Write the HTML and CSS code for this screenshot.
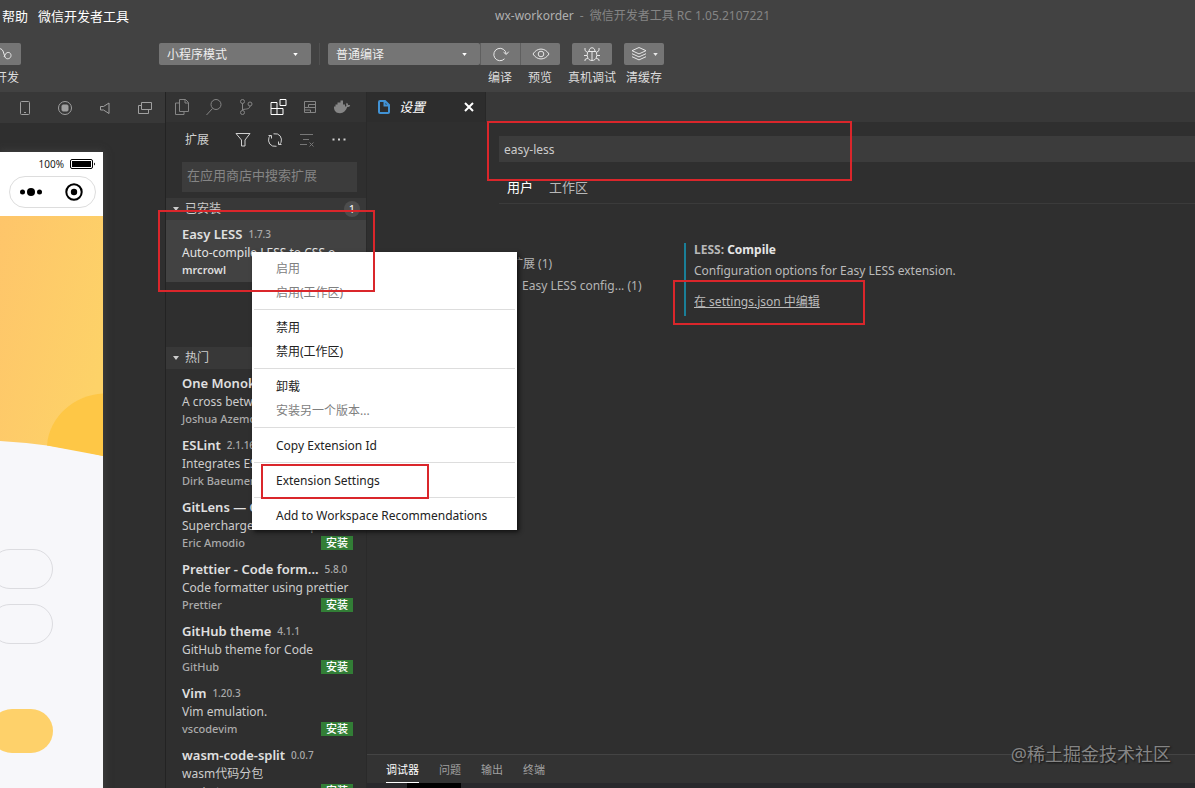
FILE: index.html
```html
<!DOCTYPE html>
<html lang="zh-CN">
<head>
<meta charset="utf-8">
<title>wx-workorder - 微信开发者工具</title>
<link rel="stylesheet" href="styles.css">
</head>
<body>
<div class="app">
  <header class="top">
    <div class="titlebar">
      <nav class="menubar"><button>帮助</button><button>微信开发者工具</button></nav>
      <div class="title"><span class="project">wx-workorder</span><span>-</span><span>微信开发者工具 RC 1.05.2107221</span></div>
    </div>
    <div class="toolbar">
      <div class="tool tool-cloud">
        <button class="tool-btn" aria-label="云开发"><svg width="24" height="16" viewBox="0 0 24 16"><path d="M9 3c2-1 4 0 5 2l2 6c1 3 6 2 6-1.500s-4-4-5.500-1.500L15 11"/></svg></button>
        <span>云开发</span>
      </div>
      <div class="pick pick-mode">
        <select aria-label="模式"><option>小程序模式</option></select>
        <svg class="caret" width="6" height="4" viewBox="0 0 6 4"><path d="M0 0h6L3 4z"/></svg>
      </div>
      <span class="divider"></span>
      <div class="compile">
        <div class="pick pick-compile">
          <select aria-label="编译模式"><option>普通编译</option></select>
          <svg class="caret" width="6" height="4" viewBox="0 0 6 4"><path d="M0 0h6L3 4z"/></svg>
        </div>
        <div class="tool">
          <button class="tool-btn mid" aria-label="编译"><svg width="18" height="16" viewBox="0 0 18 16"><path d="M12.500 12.800A6.200 6.200 0 1 1 14.200 8M11.500 6.200l2.800 2.300 2.400-2.800"/></svg></button>
          <span>编译</span>
        </div>
        <div class="tool">
          <button class="tool-btn last" aria-label="预览"><svg width="18" height="16" viewBox="0 0 18 16"><path d="M1 8c4-6.600 12-6.600 16 0-4 6.600-12 6.600-16 0z"/><circle cx="9" cy="8" r="2.800"/></svg></button>
          <span>预览</span>
        </div>
      </div>
      <div class="tool tool-debug">
        <button class="tool-btn" aria-label="真机调试"><svg width="18" height="16" viewBox="0 0 18 16"><path d="M5 5.500h8c1.500 3 1 9-4 9s-5.500-6-4-9zM6 5.500c0-5 6-5 6 0M9 5.500v9M4.500 6.500L2 4.500V2M13.500 6.500L16 4.500V2M4 9.500H1M14 9.500h3M5 12l-3 1.500V15M13 12l3 1.500V15"/></svg></button>
        <span>真机调试</span>
      </div>
      <div class="tool">
        <button class="tool-btn" aria-label="清缓存"><svg width="16" height="16" viewBox="0 0 16 16"><path d="M8 1.500l7 3.200-7 3.200-7-3.200zM1 7.700l7 3.200 7-3.200M1 10.700l7 3.200 7-3.200"/></svg><svg class="fill" width="5" height="3" viewBox="0 0 6 4"><path d="M0 0h6L3 4z"/></svg></button>
        <span>清缓存</span>
      </div>
    </div>
  </header>

  <div class="body">
    <section class="simulator">
      <div class="sim-bar">
        <button aria-label="设备"><svg width="16" height="16" viewBox="0 0 16 16"><rect x="3.500" y="1.500" width="9" height="13" rx="1"/><path d="M7 12.500h2"/></svg></button>
        <button aria-label="录制"><svg width="16" height="16" viewBox="0 0 16 16"><circle cx="8" cy="8" r="6.500"/><rect class="solid" x="5" y="5" width="6" height="6" rx="1"/></svg></button>
        <button aria-label="声音"><svg width="16" height="16" viewBox="0 0 16 16"><path d="M3.500 6.500h3L12 3v10.500L6.500 10h-3z"/></svg></button>
        <button aria-label="窗口"><svg width="16" height="16" viewBox="0 0 16 16"><path d="M4.500 2.500h10v7h-10zM4.500 5.500h-3v8h10v-4"/></svg></button>
      </div>
      <div class="phone">
        <div class="phone-top">
          <div class="battery">100%<svg width="26" height="10" viewBox="0 0 26 10"><rect x=".5" y=".5" width="22" height="9" rx="1.500" fill="none" stroke="#000"/><path d="M2 2h19v6H2zM24 3.500q2 1.500 0 3z"/></svg></div>
          <div class="capsule">
            <svg width="24" height="10" viewBox="0 0 24 10"><circle cx="3.500" cy="5" r="2.500"/><circle cx="12" cy="5" r="4"/><circle cx="20.500" cy="5" r="2.500"/></svg>
            <svg width="18" height="18" viewBox="0 0 18 18"><circle cx="9" cy="9" r="7.700" fill="none" stroke="#000" stroke-width="2"/><circle cx="9" cy="9" r="3.200"/></svg>
          </div>
        </div>
        <svg class="hero" width="103" height="240" viewBox="0 0 103 240">
          <defs><linearGradient id="sun" x1="0" y1="0" x2="1" y2=".6"><stop offset="0" stop-color="#fec56a"/><stop offset="1" stop-color="#fdd268"/></linearGradient></defs>
          <path fill="url(#sun)" d="M0 0h103v240Q55 228 0 225z"/>
          <path fill="#fec746" d="M103 177.500C75 179 49 200 47 229.500L103 240z"/>
        </svg>
        <input class="field" aria-label="账号">
        <input class="field" aria-label="密码">
        <button class="submit" aria-label="登录"></button>
      </div>
    </section>

    <aside class="sidebar">
      <div class="views">
        <button aria-label="文件"><svg width="18" height="18" viewBox="0 0 18 18"><path d="M6.500 1.500h6l3 3v9h-9zM12 1.500v3.500h3.500M6.500 5H2.500v11.500h8.500v-3"/></svg></button>
        <button aria-label="搜索"><svg width="18" height="18" viewBox="0 0 18 18"><circle cx="11" cy="6.500" r="5"/><path d="M7.500 10.500L1.500 17"/></svg></button>
        <button aria-label="源代码管理"><svg width="18" height="18" viewBox="0 0 18 18"><circle cx="5.500" cy="3.500" r="2"/><circle cx="5.500" cy="14.500" r="2"/><circle cx="13" cy="6" r="2"/><path d="M5.500 5.500v7M13 8c0 3-3.500 3-7.500 3.500"/></svg></button>
        <button class="on" aria-label="扩展"><svg width="18" height="18" viewBox="0 0 18 18"><path d="M2 4.500h6v6h6v6H2zM2 10.500h6v6M11 1.500h6v6h-6z"/></svg></button>
        <button aria-label="模板"><svg width="18" height="18" viewBox="0 0 18 18"><path d="M3.500 3.500h11v11h-11zM14.500 6.500h-7v3h7M3.500 9.500h4M3.500 12h6v2.500"/></svg></button>
        <button aria-label="Docker"><svg width="18" height="18" viewBox="0 0 18 18"><path class="solid" stroke="none" d="M1 8.500h1.500v-2h2v-2h3v-2h2.500v4h2v2c1 0 1.500-.3 1.500-.8-.6-.9-.5-2 .3-3 .8.600 1.300 1.400 1.300 2.300.800-.1 1.500 0 2.100.4-.500 1.200-1.500 1.700-2.900 1.700C13 13 10.500 15.200 7 15.200 2.800 15.200.8 12.500 1 8.500z"/></svg></button>
      </div>
      <div class="side-title">
        <h2>扩展</h2>
        <button aria-label="筛选"><svg width="18" height="18" viewBox="0 0 18 18"><path d="M2 2.500h14L11 9v6H7.500V9z"/></svg></button>
        <button aria-label="刷新"><svg width="18" height="18" viewBox="0 0 18 18"><path d="M6.500 15A6.400 6.400 0 0 1 5 4M11.500 3A6.400 6.400 0 0 1 13 14M2.500 4.500h3v3M15.500 13.500h-3v-3M7.500 2.800l4 .2M10.500 15.300l-4-.3"/></svg></button>
        <button class="dim" aria-label="清除"><svg width="18" height="18" viewBox="0 0 18 18"><path d="M2 3.500h13M5 8.500h6M2 13.500h7M11.500 11.500l4 4M15.500 11.500l-4 4"/></svg></button>
        <button aria-label="更多"><svg width="18" height="18" viewBox="0 0 18 18"><path class="solid" d="M2.500 7.500h2v2h-2zM8 7.500h2v2H8zM13.500 7.500h2v2h-2z" stroke="none"/></svg></button>
      </div>
      <div class="side-search"><input type="text" placeholder="在应用商店中搜索扩展" aria-label="在应用商店中搜索扩展"></div>

      <h3 class="group"><svg width="8" height="6" viewBox="0 0 8 6"><path d="M1 1h6L4 5z"/></svg>已安装<span class="badge">1</span></h3>
      <ul class="list installed">
        <li class="ext active"><p class="name"><b>Easy LESS</b><small>1.7.3</small></p><p class="desc">Auto-compile LESS to CSS o</p><p class="by"><b>mrcrowl</b></p></li>
      </ul>
      <h3 class="group"><svg width="8" height="6" viewBox="0 0 8 6"><path d="M1 1h6L4 5z"/></svg>热门</h3>
      <ul class="list">
        <li class="ext"><p class="name"><b>One Monokai</b></p><p class="desc">A cross between</p><p class="by"><span>Joshua Azemoh</span></p></li>
        <li class="ext"><p class="name"><b>ESLint</b><small>2.1.16</small></p><p class="desc">Integrates ESLint</p><p class="by"><span>Dirk Baeumer</span></p></li>
        <li class="ext"><p class="name"><b>GitLens — Git</b></p><p class="desc">Supercharge the Git cap</p><p class="by"><span>Eric Amodio</span><button>安装</button></p></li>
        <li class="ext"><p class="name"><b>Prettier - Code form...</b><small>5.8.0</small></p><p class="desc">Code formatter using prettier</p><p class="by"><span>Prettier</span><button>安装</button></p></li>
        <li class="ext"><p class="name"><b>GitHub theme</b><small>4.1.1</small></p><p class="desc">GitHub theme for Code</p><p class="by"><span>GitHub</span><button>安装</button></p></li>
        <li class="ext"><p class="name"><b>Vim</b><small>1.20.3</small></p><p class="desc">Vim emulation.</p><p class="by"><span>vscodevim</span><button>安装</button></p></li>
        <li class="ext"><p class="name"><b>wasm-code-split</b><small>0.0.7</small></p><p class="desc">wasm代码分包</p><p class="by"><span>wechat</span><button>安装</button></p></li>
      </ul>
    </aside>

    <main class="editor">
      <div class="tabs">
        <div class="tab">
          <svg width="12" height="14" viewBox="0 0 12 14"><path d="M2 1h5l4 4v7a1 1 0 0 1-1 1H2a1 1 0 0 1-1-1V2a1 1 0 0 1 1-1zM6.500 1v4.500H11"/></svg>
          <em>设置</em>
          <button aria-label="关闭"><svg width="10" height="10" viewBox="0 0 10 10"><path d="M1 1l8 8M9 1L1 9"/></svg></button>
        </div>
      </div>
      <div class="settings">
        <input class="query" type="text" value="easy-less" aria-label="搜索设置">
        <div class="scopes"><button class="on">用户</button><button>工作区</button></div>
        <div class="columns">
          <nav class="toc"><a href="#ext">扩展 (1)</a><a class="sub" href="#less">Easy LESS config... (1)</a></nav>
          <section class="setting" id="less">
            <h4><span>LESS:</span> Compile</h4>
            <p>Configuration options for Easy LESS extension.</p>
            <a href="#json">在 settings.json 中编辑</a>
          </section>
        </div>
      </div>
      <div class="panel">
        <button class="on">调试器</button><button>问题</button><button>输出</button><button>终端</button>
      </div>
      <div class="strip"><i></i></div>
    </main>
  </div>

  <div class="menu" role="menu">
    <button role="menuitem" disabled>启用</button>
    <button role="menuitem" disabled>启用(工作区)</button>
    <hr>
    <button role="menuitem">禁用</button>
    <button role="menuitem">禁用(工作区)</button>
    <hr>
    <button role="menuitem">卸载</button>
    <button role="menuitem" disabled>安装另一个版本...</button>
    <hr>
    <button role="menuitem">Copy Extension Id</button>
    <hr>
    <button role="menuitem">Extension Settings</button>
    <hr>
    <button role="menuitem">Add to Workspace Recommendations</button>
  </div>
  <div class="mark mark-ext"></div>
  <div class="mark mark-query"></div>
  <div class="mark mark-json"></div>
  <div class="mark mark-menu"></div>
  <div class="watermark">@稀土掘金技术社区</div>
</div>
</body>
</html>
```
FILE: styles.css
```css
* { box-sizing: border-box; margin: 0; padding: 0; }
body {
  font-family: "Noto Sans", "Noto Sans CJK SC", sans-serif;
  font-size: 12px;
  line-height: 18px;
  color: #ccc;
  background: #2f2f2f;
}
button, input, select { font: inherit; color: inherit; background: none; border: 0; outline: 0; }
a { color: inherit; }
ul { list-style: none; }
svg { display: block; flex: none; fill: none; stroke: currentColor; }
svg .solid { fill: currentColor; }

.app { position: relative; display: flex; flex-direction: column; height: 100vh; overflow: hidden; }
.top { background: #424242; height: 92px; flex: none; }
.titlebar { position: relative; height: 31px; display: flex; align-items: center; font-size: 13px; }
.menubar { display: flex; gap: 10px; padding-left: 2px; color: #fff; }
.title { position: absolute; left: 495px; display: flex; gap: 6px; color: #858585; font-size: 12px; white-space: nowrap; }
.title .project { color: #b0b0b0; }

.toolbar { display: flex; align-items: flex-start; padding-top: 12px; color: #ddd; }
.tool { display: flex; flex-direction: column; align-items: center; gap: 4px; width: 40px; white-space: nowrap; }
.tool-btn { width: 40px; height: 22px; display: flex; align-items: center; justify-content: center; gap: 6px; background: #757575; border-radius: 2px; color: #e8e8e8; }
.fill { fill: currentColor; stroke: none; }
.mid, .last { border-left: 1px solid #5f5f5f; border-radius: 0; }
.last { border-radius: 0 2px 2px 0; }
.tool-cloud { margin-left: -19px; align-items: flex-end; padding-right: 2px; }
.tool-cloud .tool-btn { margin-right: -2px; }
.pick { position: relative; height: 22px; }
.pick select { appearance: none; width: 100%; height: 22px; padding: 2px 8px 0; background: #757575; border-radius: 2px; color: #eee; }
.caret { position: absolute; right: 13px; top: 10px; width: 5px; height: 3px; fill: #fff; stroke: none; }
.pick-mode { width: 152px; margin-left: 138px; }
.divider { width: 1px; height: 22px; margin: 0 8px; background: #505050; }
.compile { display: flex; }
.pick-compile { width: 152px; }
.tool-debug { margin: 0 12px; }

.body { flex: 1; display: flex; min-height: 0; }
.simulator { width: 166px; flex: none; border-right: 1px solid #232323; }
.sim-bar { height: 31px; display: flex; align-items: center; gap: 24px; padding-left: 17px; background: #383838; color: #a0a0a0; }
.phone { width: 103px; height: 100%; margin-top: 29px; background: #f7f7fa; box-shadow: 0 0 8px #444; }
.phone-top { height: 64px; padding: 3px 7px 0 9px; background: #fff; color: #222; font-size: 10px; }
.battery { display: flex; align-items: center; justify-content: flex-end; gap: 6px; }
.phone-top svg { fill: #000; stroke: none; }
.capsule { display: flex; align-items: center; justify-content: space-between; width: 87px; height: 32px; margin-top: 3px; padding: 0 12px 0 9px; border: 1px solid #ddd; border-radius: 16px; }
.hero { stroke: none; margin-bottom: 93px; }
.field { display: block; width: 63px; height: 40px; margin: 0 0 15px -10px; border: 1px solid #dcdce0; border-radius: 20px; }
.submit { display: block; width: 63px; height: 44px; margin: 65px 0 0 -10px; border-radius: 22px; background: #fed16a; }

.sidebar { width: 200px; flex: none; overflow: hidden; }
.views { height: 30px; display: flex; align-items: center; gap: 14px; padding-left: 7px; background: #333; color: #858585; }
.views .on { color: #fff; }
.side-title { height: 36px; display: flex; align-items: center; gap: 14px; padding-left: 19px; color: #d0d0d0; }
.side-title h2 { font-size: 12px; font-weight: 400; width: 35px; }
.side-title .dim { color: #777; }
.side-search { padding: 4px 9px 6px 16px; }
.side-search input { display: block; width: 100%; height: 30px; padding: 0 5px 4px; background: #3c3c3c; font-size: 13px; }
.side-search input::placeholder { color: #858585; }
.group { display: flex; align-items: center; gap: 5px; height: 22px; padding: 0 6px; background: #383838; font-size: 12px; font-weight: 400; }
.group svg { fill: #ccc; stroke: none; }
.badge { margin-left: auto; width: 16px; height: 16px; border-radius: 8px; background: #4d4d4d; color: #fff; font-size: 11px; line-height: 16px; text-align: center; }
.installed { height: 127px; }
.ext { height: 62px; padding: 5px 13px 0 16px; }
.ext.active { background: #424242; color: #e4e4e4; }
.ext p { display: flex; align-items: center; height: 18px; white-space: nowrap; }
.name b { font-size: 13px; font-weight: 600; color: #e0e0e0; }
.name small { margin-left: 6px; font-size: 10px; font-weight: 500; color: #aaa; }
.ext .desc { display: block; line-height: 20px; }
.ext .by { justify-content: space-between; font-size: 11px; line-height: 20px; font-weight: 500; color: #aaa; }
.by b { font-weight: 600; }
.active .by { color: #ddd; }
.by button { width: 32px; height: 14px; background: #327e36; color: #fff; font-size: 11px; line-height: 14px; }

.editor { flex: 1; display: flex; flex-direction: column; min-width: 0; border-left: 1px solid #2a2a2a; }
.tabs { height: 30px; flex: none; background: #383838; }
.tab { width: 119px; height: 30px; display: flex; align-items: center; padding: 0 11px; background: #2d2d2d; border-right: 1px solid #282828; color: #fff; }
.tab > svg { color: #4192d4; stroke-width: 2; }
.tab em { margin-left: 9px; font-size: 13px; }
.tab button { margin-left: auto; }
.tab button svg { stroke-width: 2; }
.settings { flex: 1; padding: 14px 0 0 132px; }
.query { display: block; width: 100%; height: 26px; padding: 0 5px; background: #3c3c3c; color: #ccc; }
.scopes { display: flex; gap: 16px; padding: 15px 8px 7px; height: 42px; border-bottom: 1px solid #3b3b3b; font-size: 13px; line-height: 20px; color: #b8b8b8; }
.scopes .on { color: #fff; }
.columns { display: flex; padding-top: 39px; }
.toc { display: flex; flex-direction: column; gap: 4px; width: 185px; padding: 12px 0 0 12px; color: #b4b4b4; white-space: nowrap; }
.toc a { text-decoration: none; }
.toc .sub { padding-left: 11px; }
.setting { border-left: 2px solid #1a7f98; padding-left: 8px; height: 73px; display: flex; flex-direction: column; align-items: flex-start; color: #bbb; }
.setting h4 { font-size: 12px; line-height: 14px; color: #e6e6e6; }
.setting h4 span { color: #b8b8b8; }
.setting p { margin: 5px 0 13px; }
.panel { display: flex; gap: 20px; height: 29px; padding-left: 19px; background: #333; border-top: 1px solid #444; font-size: 11px; color: #a0a0a0; flex: none; }
.panel button { border-bottom: 1px solid transparent; padding-top: 2px; }
.panel .on { color: #fff; border-color: #fff; }
.strip { height: 5px; flex: none; background: #29292c; padding-left: 40px; }
.strip i { display: block; width: 54px; height: 5px; background: #000; }

.menu { position: absolute; left: 252px; top: 252px; width: 265px; padding: 4px 2px 3px; background: #fff; color: #222; box-shadow: 2px 2px 4px #111; }
.menu button { display: block; width: 100%; height: 24px; padding: 1px 0 0 22px; text-align: left; }
.menu button:disabled { color: #808080; }
.menu hr { border: 0; height: 1px; margin: 5px 0; background: #ddd; }
.mark { position: absolute; border: 2px solid #da262b; pointer-events: none; }
.mark-ext { left: 158px; top: 210px; width: 217px; height: 82px; }
.mark-query { left: 487px; top: 121px; width: 365px; height: 60px; }
.mark-json { left: 673px; top: 280px; width: 192px; height: 45px; }
.mark-menu { left: 261px; top: 464px; width: 168px; height: 35px; }
.watermark { position: absolute; right: 24px; bottom: 22px; font-size: 18px; line-height: 24px; color: #858585; text-shadow: 1px 1px 2px #111; }
```
